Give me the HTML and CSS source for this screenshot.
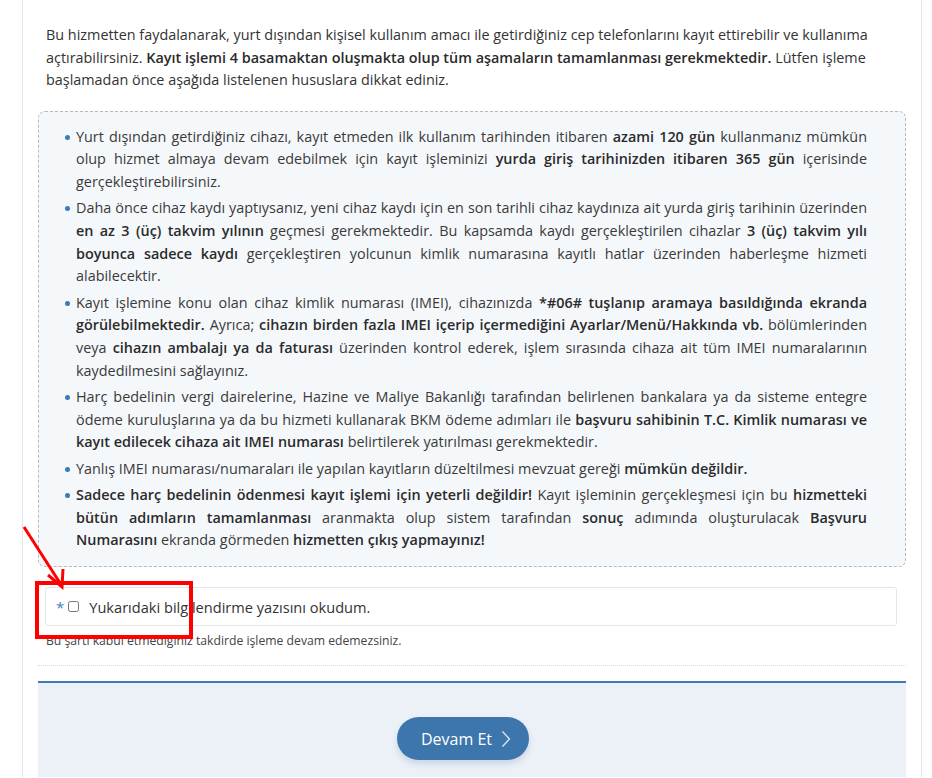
FILE: index.html
```html
<!DOCTYPE html>
<html lang="tr">
<head>
<meta charset="utf-8">
<title>Cihaz Kaydı</title>
<link rel="stylesheet" href="styles.css">
</head>
<body>
<div class="panel">
  <p class="intro">Bu hizmetten faydalanarak, yurt dışından kişisel kullanım amacı ile getirdiğiniz cep telefonlarını kayıt ettirebilir ve kullanıma açtırabilirsiniz. <b>Kayıt işlemi 4 basamaktan oluşmakta olup tüm aşamaların tamamlanması gerekmektedir.</b> Lütfen işleme başlamadan önce aşağıda listelenen hususlara dikkat ediniz.</p>

  <div class="notice">
    <ul class="notice-list">
      <li>Yurt dışından getirdiğiniz cihazı, kayıt etmeden ilk kullanım tarihinden itibaren <b>azami 120 gün</b> kullanmanız mümkün olup hizmet almaya devam edebilmek için kayıt işleminizi <b>yurda giriş tarihinizden itibaren 365 gün</b> içerisinde gerçekleştirebilirsiniz.</li>
      <li>Daha önce cihaz kaydı yaptıysanız, yeni cihaz kaydı için en son tarihli cihaz kaydınıza ait yurda giriş tarihinin üzerinden <b>en az 3 (üç) takvim yılının</b> geçmesi gerekmektedir. Bu kapsamda kaydı gerçekleştirilen cihazlar <b>3 (üç) takvim yılı boyunca sadece kaydı</b> gerçekleştiren yolcunun kimlik numarasına kayıtlı hatlar üzerinden haberleşme hizmeti alabilecektir.</li>
      <li>Kayıt işlemine konu olan cihaz kimlik numarası (IMEI), cihazınızda <b>*#06# tuşlanıp aramaya basıldığında ekranda görülebilmektedir.</b> Ayrıca; <b>cihazın birden fazla IMEI içerip içermediğini Ayarlar/Menü/Hakkında vb.</b> bölümlerinden veya <b>cihazın ambalajı ya da faturası</b> üzerinden kontrol ederek, işlem sırasında cihaza ait tüm IMEI numaralarının kaydedilmesini sağlayınız.</li>
      <li>Harç bedelinin vergi dairelerine, Hazine ve Maliye Bakanlığı tarafından belirlenen bankalara ya da sisteme entegre ödeme kuruluşlarına ya da bu hizmeti kullanarak BKM ödeme adımları ile <b>başvuru sahibinin T.C. Kimlik numarası ve kayıt edilecek cihaza ait IMEI numarası</b> belirtilerek yatırılması gerekmektedir.</li>
      <li>Yanlış IMEI numarası/numaraları ile yapılan kayıtların düzeltilmesi mevzuat gereği <b>mümkün değildir.</b></li>
      <li><b>Sadece harç bedelinin ödenmesi kayıt işlemi için yeterli değildir!</b> Kayıt işleminin gerçekleşmesi için bu <b>hizmetteki bütün adımların tamamlanması</b> aranmakta olup sistem tarafından <b>sonuç</b> adımında oluşturulacak <b>Başvuru Numarasını</b> ekranda görmeden <b>hizmetten çıkış yapmayınız!</b></li>
    </ul>
  </div>

  <div class="confirm">
    <span class="req">*</span>
    <input type="checkbox" id="okudum" class="check">
    <label for="okudum" class="confirm-label">Yukarıdaki bilgilendirme yazısını okudum.</label>
  </div>
  <p class="help">Bu şartı kabul etmediğiniz takdirde işleme devam edemezsiniz.</p>

  <div class="divider"></div>

  <div class="actions">
    <button class="btn" type="button">Devam Et
      <svg class="chev" width="10" height="18" viewBox="0 0 10 18"><path d="M1.5 1.5 L8.5 9 L1.5 16.5" fill="none" stroke="#dbe6f2" stroke-width="1.3"/></svg>
    </button>
  </div>

  <div class="annot-box"></div>
  <svg class="annot-arrow" width="60" height="80" viewBox="0 0 60 80">
    <line x1="2" y1="2" x2="38" y2="58" stroke="#f00" stroke-width="3"/>
    <polyline points="26,50 40,62 41,44" fill="none" stroke="#f00" stroke-width="3" stroke-linejoin="miter"/>
  </svg>
</div>
</body>
</html>
```

FILE: styles.css
```css
html, body {
  margin: 0;
  padding: 0;
  background: #fff;
}

body {
  font-family: "Open Sans", "Liberation Sans", sans-serif;
  color: #333;
  font-size: 14.4px;
  height: 778px;
  overflow: hidden;
}

.panel {
  position: relative;
  margin-left: 22px;
  border-left: 1px solid #e6e6e6;
  border-right: 1px solid #e6e6e6;
  padding: 0 15px;
  box-sizing: content-box;
  width: 868px;
}

.intro {
  margin: 0;
  padding: 24px 8px 0 8px;
  line-height: 22.5px;
  font-size: 14.4px;
  color: #333;
}

.intro b, .notice b {
  font-weight: 600;
  color: #2b2b2b;
}

.notice {
  margin-top: 19px;
  background: #f5f8fb;
  border: 1px dashed #b9b9b9;
  border-radius: 7px;
  padding: 14px 38px 14px 37px;
}

.notice-list {
  list-style: none;
  margin: 0;
  padding: 0;
}

.notice-list li {
  position: relative;
  line-height: 22.7px;
  text-align: justify;
  margin-bottom: 3.6px;
  color: #3a3a3a;
}

.notice-list li:last-child {
  margin-bottom: 0;
}

.notice-list li::before {
  content: "";
  position: absolute;
  left: -11px;
  top: 9px;
  width: 5px;
  height: 5px;
  border-radius: 50%;
  background: #3d7ab8;
}

.confirm {
  margin: 20px 9px 0 7px;
  height: 37px;
  border: 1px solid #e6e6e6;
  border-radius: 3px;
  display: flex;
  align-items: center;
  padding-left: 10px;
}

.req {
  color: #4d7fb0;
  font-size: 15px;
  margin-right: 4px;
}

.check {
  margin: 0 10px 0 0;
  width: 11px;
  height: 11px;
}

.confirm-label {
  font-size: 14.6px;
  color: #333;
}

.help {
  margin: 6px 0 0 8px;
  font-size: 12.2px;
  line-height: 17px;
  color: #444;
}

.divider {
  margin-top: 16px;
  border-top: 1px dotted #dcdcdc;
}

.actions {
  margin-top: 15px;
  border-top: 2px solid #3d7ab8;
  background: #ecf1f8;
  padding-top: 34px;
  height: 60px;
  display: flex;
  justify-content: center;
}

.btn {
  height: 43px;
  width: 132px;
  margin-right: 18px;
  border: none;
  border-radius: 22px;
  background: #3c76ad;
  color: #fff;
  font-family: "Open Sans", "Liberation Sans", sans-serif;
  font-size: 16px;
  display: flex;
  align-items: center;
  justify-content: center;
  gap: 9px;
  padding: 0 0 0 6px;
  box-shadow: 0 4px 6px rgba(60, 90, 130, 0.18);
}

.chev {
  display: block;
}

.annot-box {
  position: absolute;
  left: 12px;
  top: 581px;
  width: 150px;
  height: 50px;
  border: 4px solid #ff0000;
}

.annot-arrow {
  position: absolute;
  left: -1px;
  top: 525px;
}
```
